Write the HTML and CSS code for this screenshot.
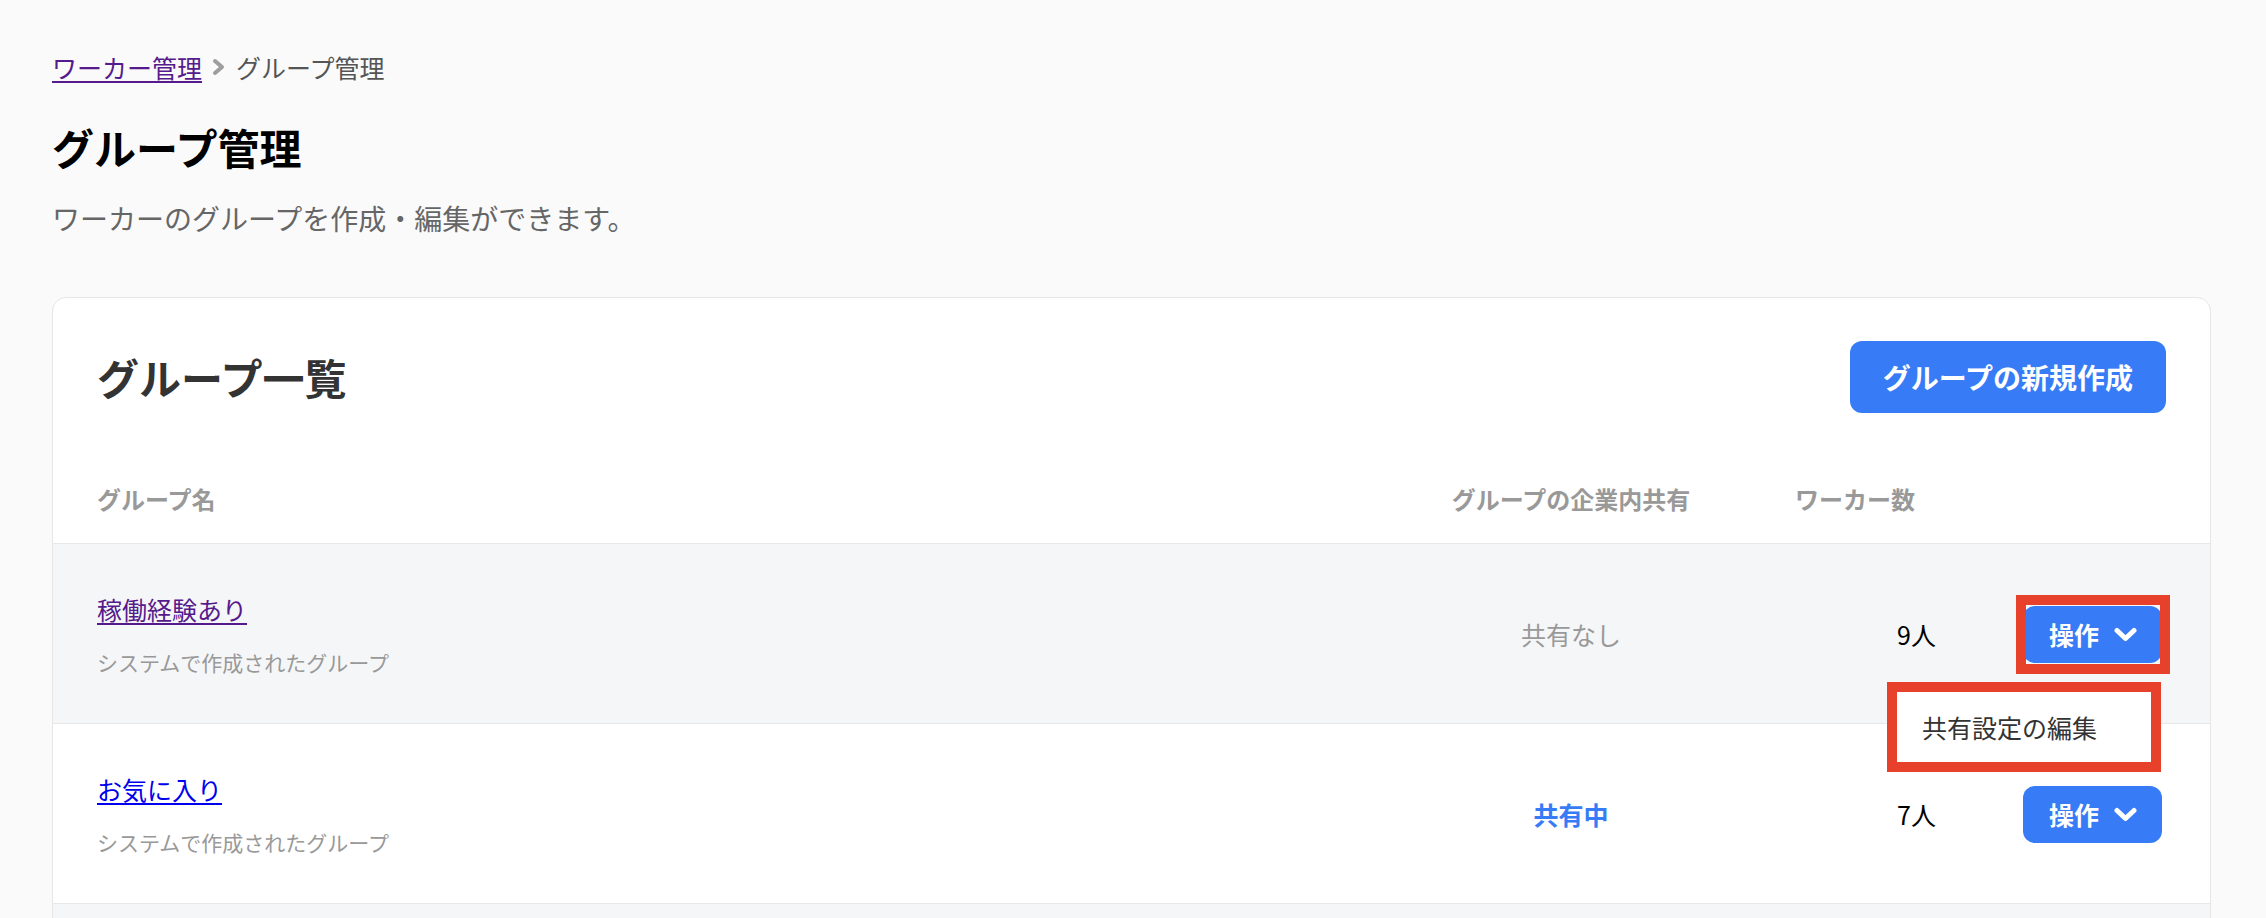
FILE: index.html
```html
<!DOCTYPE html>
<html lang="ja">
<head>
<meta charset="utf-8">
<title>グループ管理</title>
<link rel="stylesheet" href="styles.css">
</head>
<body>
<main class="page">
  <nav class="crumbs">
    <a class="crumb-link" href="#">ワーカー管理</a>
    <svg class="crumb-sep" viewBox="0 0 13 18" aria-hidden="true"><polyline points="3,3 10,9 3,15" fill="none" stroke="#9e9e9e" stroke-width="4" stroke-linecap="round" stroke-linejoin="round"/></svg>
    <span class="crumb-current">グループ管理</span>
  </nav>
  <h1 class="page-title">グループ管理</h1>
  <p class="page-desc">ワーカーのグループを作成・編集ができます。</p>

  <section class="card">
    <div class="card-head">
      <h2 class="card-title">グループ一覧</h2>
      <button class="btn-primary" type="button">グループの新規作成</button>
    </div>
    <div class="table">
      <div class="row-grid thead">
        <div class="th">グループ名</div>
        <div class="th th-center">グループの企業内共有</div>
        <div class="th th-count">ワーカー数</div>
        <div class="th"></div>
      </div>

      <div class="row-grid trow striped">
        <div class="name-cell">
          <a class="group-link visited" href="#">稼働経験あり</a>
          <div class="group-sub">システムで作成されたグループ</div>
        </div>
        <div class="share-cell">共有なし</div>
        <div class="count-cell">9人</div>
        <div class="ops">
          <button class="btn-ops" type="button">操作<svg class="ops-chev" viewBox="0 0 25 15" aria-hidden="true"><polyline points="4,3.5 12.5,11.5 21,3.5" fill="none" stroke="#fff" stroke-width="5" stroke-linecap="round" stroke-linejoin="round"/></svg></button>
          <div class="menu">共有設定の編集</div>
          <div class="annot annot-btn"></div>
          <div class="annot annot-menu"></div>
        </div>
      </div>

      <div class="row-grid trow">
        <div class="name-cell">
          <a class="group-link" href="#">お気に入り</a>
          <div class="group-sub">システムで作成されたグループ</div>
        </div>
        <div class="share-cell shared">共有中</div>
        <div class="count-cell">7人</div>
        <div class="ops">
          <button class="btn-ops" type="button">操作<svg class="ops-chev" viewBox="0 0 25 15" aria-hidden="true"><polyline points="4,3.5 12.5,11.5 21,3.5" fill="none" stroke="#fff" stroke-width="5" stroke-linecap="round" stroke-linejoin="round"/></svg></button>
        </div>
      </div>

      <div class="row-grid trow striped trow-empty"></div>
    </div>
  </section>
</main>
</body>
</html>
```

FILE: styles.css
```css
* {
  box-sizing: border-box;
}

body {
  margin: 0;
  background: #fafafa;
  font-family: "Noto Sans CJK JP", "Noto Sans", sans-serif;
  color: #000;
}

.page {
  padding: 48px 55px 0 52px;
}

/* breadcrumb */
.crumbs {
  display: flex;
  align-items: center;
  height: 38px;
  font-size: 25px;
  line-height: 38px;
}

.crumb-link {
  color: #551a8b;
  text-decoration: underline;
  text-underline-offset: 3px;
}

.crumb-sep {
  width: 13px;
  height: 18px;
  margin: 0 11px 0 10px;
}

.crumb-current {
  color: #555;
}

.page-title {
  margin: 32px 0 0;
  font-size: 42px;
  line-height: 58px;
  font-weight: 700;
  color: #000;
}

.page-desc {
  margin: 22px 0 0;
  font-size: 28px;
  line-height: 40px;
  color: #666;
}

/* card */
.card {
  margin-top: 59px;
  background: #fff;
  border: 1px solid #e6e6e6;
  border-radius: 14px;
  overflow: hidden;
}

.card-head {
  display: flex;
  justify-content: space-between;
  align-items: center;
  padding: 43px 44px 0;
}

.card-title {
  margin: 0;
  font-size: 42px;
  line-height: 58px;
  font-weight: 700;
  color: #333;
}

.btn-primary {
  height: 72px;
  padding: 0 33px;
  border: none;
  border-radius: 12px;
  background: #377cf6;
  color: #fff;
  font-family: inherit;
  font-size: 28px;
  font-weight: 700;
}

/* table */
.row-grid {
  display: grid;
  grid-template-columns: 1fr 302px 214px 230px;
  align-items: center;
  padding: 0 44px;
  border-bottom: 1px solid #e8e8e8;
}

.thead {
  padding-top: 68px;
  padding-bottom: 26px;
  font-size: 24px;
  line-height: 36px;
  font-weight: 700;
  color: #999;
}

.th-center {
  text-align: center;
}

.th-count {
  padding-left: 73px;
}

.trow {
  padding-top: 46px;
  padding-bottom: 45px;
}

.striped {
  background: #f5f6f8;
}

.trow-empty {
  min-height: 180px;
}

.name-cell {
  display: flex;
  flex-direction: column;
  align-items: flex-start;
}

.group-link {
  font-size: 25px;
  line-height: 38px;
  color: #0000ee;
  text-decoration: underline;
  text-underline-offset: 3px;
}

.group-link.visited {
  color: #551a8b;
}

.group-sub {
  margin-top: 18px;
  font-size: 21px;
  line-height: 32px;
  color: #999;
}

.share-cell {
  text-align: center;
  font-size: 25px;
  line-height: 38px;
  color: #999;
}

.share-cell.shared {
  color: #377cf6;
  font-weight: 700;
}

.count-cell {
  text-align: right;
  font-size: 25px;
  line-height: 38px;
  color: #000;
}

.ops {
  position: relative;
  justify-self: end;
  margin-right: 4px;
  height: 57px;
}

.btn-ops {
  display: inline-flex;
  align-items: center;
  gap: 14px;
  width: 139px;
  height: 57px;
  padding: 0 24px 0 26px;
  border: none;
  border-radius: 12px;
  background: #377cf6;
  color: #fff;
  font-family: inherit;
  font-size: 25px;
  font-weight: 700;
}

.ops-chev {
  width: 25px;
  height: 15px;
  flex: none;
}

.menu {
  position: absolute;
  left: -128px;
  top: 84px;
  width: 258px;
  height: 74px;
  padding-left: 27px;
  background: #fff;
  box-shadow: 0 2px 8px rgba(0, 0, 0, 0.15);
  font-size: 25px;
  line-height: 74px;
  color: #333;
  white-space: nowrap;
  z-index: 2;
}

.annot {
  position: absolute;
  border: 10px solid #e8412b;
  pointer-events: none;
  z-index: 3;
}

.annot-btn {
  left: -7px;
  top: -11px;
  width: 154px;
  height: 79px;
}

.annot-menu {
  left: -136px;
  top: 76px;
  width: 274px;
  height: 90px;
}
```
